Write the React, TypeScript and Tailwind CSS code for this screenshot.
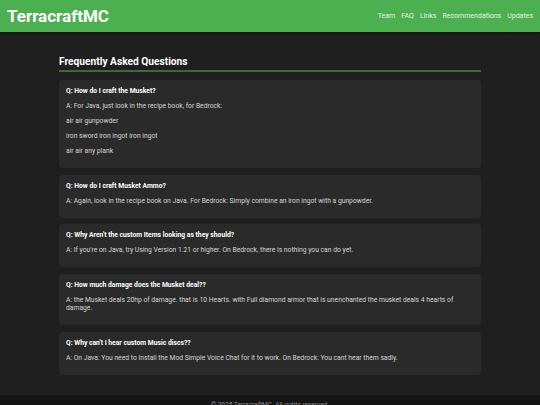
const FAQS: { q: string; a: string[] }[] = [
  {
    q: "Q: How do I craft the Musket?",
    a: [
      "A: For Java, just look in the recipe book, for Bedrock:",
      "air air gunpowder",
      "iron sword iron ingot iron ingot",
      "air air any plank",
    ],
  },
  {
    q: "Q: How do I craft Musket Ammo?",
    a: ["A: Again, look in the recipe book on Java. For Bedrock: Simply combine an iron ingot with a gunpowder."],
  },
  {
    q: "Q: Why Aren't the custom Items looking as they should?",
    a: ["A: If you're on Java, try Using Version 1.21 or higher. On Bedrock, there is nothing you can do yet."],
  },
  {
    q: "Q: How much damage does the Musket deal??",
    a: [
      "A: the Musket deals 20hp of damage. that is 10 Hearts. with Full diamond armor that is unenchanted the musket deals 4 hearts of damage.",
    ],
  },
  {
    q: "Q: Why can't I hear custom Music discs??",
    a: ["A: On Java: You need to Install the Mod Simple Voice Chat for it to work. On Bedrock: You cant hear them sadly."],
  },
];

const NAV = ["Team", "FAQ", "Links", "Recommendations", "Updates"];

export default function App() {
  return (
    <div className="min-h-[405px] bg-[#1f1f1f] font-['Roboto',sans-serif] flex flex-col">
      <header className="h-[32px] bg-[#4caf50] flex items-center justify-between px-[7px] shadow-[0_1px_2px_rgba(0,0,0,0.6)] relative z-10">
        <h1 className="text-[17px] font-bold text-white leading-none">TerracraftMC</h1>
        <nav className="flex gap-[6px] pt-[1px]">
          {NAV.map((n) => (
            <span key={n} className="text-[7px] text-[#e8f4e8] leading-none">{n}</span>
          ))}
        </nav>
      </header>

      <main className="w-[422px] mx-auto pt-[23px] pb-[20px] flex-1">
        <h2 className="text-[10.2px] font-bold text-white leading-[13px] pb-[2px] border-b-2 border-[#3b6b3d]">
          Frequently Asked Questions
        </h2>
        <div className="mt-[8px] flex flex-col gap-[6.5px]">
          {FAQS.map((f) => (
            <div key={f.q} className="bg-[#2a2a2a] rounded-[4px] px-[7px] pt-[7px] pb-[6px]">
              <h3 className="text-[6.75px] font-bold text-white leading-[9px] mb-[6px]">{f.q}</h3>
              {f.a.map((line) => (
                <p key={line} className="text-[6.75px] text-[#d6d6d6] leading-[8.5px] mb-[6.5px]">{line}</p>
              ))}
            </div>
          ))}
        </div>
      </main>

      <footer className="bg-[#141414] h-[24px] flex items-start justify-center pt-[7px]">
        <span className="text-[6.5px] text-[#8a8a8a] leading-none">© 2025 TerracraftMC. All rights reserved.</span>
      </footer>
    </div>
  );
}
